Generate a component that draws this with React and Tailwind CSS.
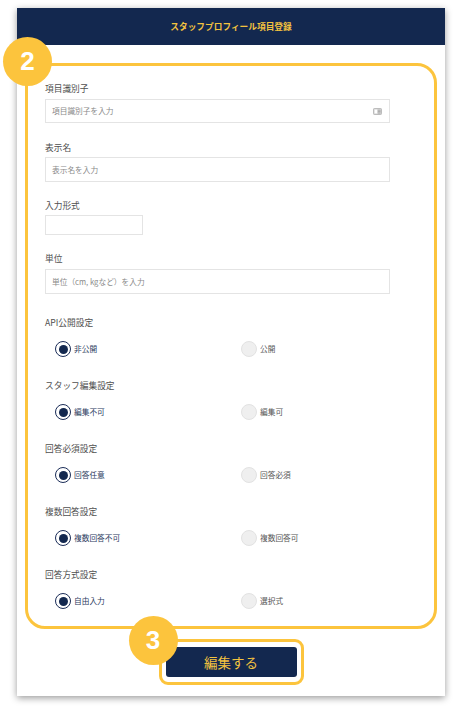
import React from "react";

const font = { fontFamily: '"Noto Sans CJK JP", "Noto Sans", sans-serif' };

function Label({ children, className = "" }) {
  return (
    <div className={`h-[12px] text-[8.7px] leading-[12px] text-[#4f4f4f] ${className}`}>
      {children}
    </div>
  );
}

function TextField({ placeholder, icon, className = "" }) {
  return (
    <div
      className={`flex items-center justify-between border border-[#e4e4e4] bg-white pl-[6px] pr-[6px] ${className}`}
    >
      <span className="text-[7.7px] text-[#8a8a8a]">{placeholder}</span>
      {icon && (
        <svg width="9" height="7" viewBox="0 0 9 7" className="mr-[1px]">
          <rect x="0.5" y="0.5" width="8" height="6" rx="0.8" fill="#d6d6d6" stroke="#b0b0b0" strokeWidth="0.8" />
          <rect x="1.6" y="1.6" width="2.4" height="3.8" fill="#ffffff" />
          <line x1="5" y1="2.2" x2="7.6" y2="2.2" stroke="#9a9a9a" strokeWidth="0.7" />
          <line x1="5" y1="3.6" x2="7.6" y2="3.6" stroke="#9a9a9a" strokeWidth="0.7" />
          <line x1="5" y1="5" x2="7.6" y2="5" stroke="#9a9a9a" strokeWidth="0.7" />
        </svg>
      )}
    </div>
  );
}

function Radio({ checked, label }) {
  return (
    <div className="flex items-center gap-[3px]">
      {checked ? (
        <div className="flex h-[16px] w-[16px] items-center justify-center rounded-full border-[1.5px] border-[#1b2d58] bg-white">
          <div className="h-[9px] w-[9px] rounded-full bg-[#13284f]" />
        </div>
      ) : (
        <div className="h-[16px] w-[16px] rounded-full border border-[#e2e2e2] bg-[#efefef]" />
      )}
      <span
        className={`text-[7.7px] leading-[12px] ${checked ? "text-[#2a3a60]" : "text-[#555555]"}`}
      >
        {label}
      </span>
    </div>
  );
}

const radioGroups = [
  { title: "API公開設定", options: ["非公開", "公開"] },
  { title: "スタッフ編集設定", options: ["編集不可", "編集可"] },
  { title: "回答必須設定", options: ["回答任意", "回答必須"] },
  { title: "複数回答設定", options: ["複数回答不可", "複数回答可"] },
  { title: "回答方式設定", options: ["自由入力", "選択式"] },
];

function Badge({ n, className }) {
  return (
    <div
      className={`absolute z-10 flex h-[49px] w-[49px] items-center justify-center rounded-full bg-[#fcc43d] text-[26px] font-bold text-white ${className}`}
      style={{ fontFamily: '"Liberation Sans", Arial, sans-serif' }}
    >
      {n}
    </div>
  );
}

export default function App() {
  return (
    <div className="h-[708px] w-[455px] bg-white pt-[8px]" style={font}>
      <div className="ml-[17px] flex h-[688px] w-[428px] flex-col bg-white shadow-[0_2px_7px_rgba(0,0,0,0.4)]">
        {/* header */}
        <div className="flex h-[37px] items-center justify-center bg-[#13284f]">
          <span className="text-[8.7px] font-bold text-[#f3c33f]">
            スタッフプロフィール項目登録
          </span>
        </div>

        {/* form */}
        <div className="relative mx-[8px] mt-[18px] rounded-[20px] border-[3px] border-[#fcc43d] pb-[17px] pl-[17px] pt-[17px]">
          <Badge n="2" className="left-[-25px] top-[-29px]" />

          <Label>項目識別子</Label>
          <TextField placeholder="項目識別子を入力" icon className="mt-[4px] h-[24px] w-[345px]" />

          <Label className="mt-[19px]">表示名</Label>
          <TextField placeholder="表示名を入力" className="mt-[3px] h-[25px] w-[345px]" />

          <Label className="mt-[18px]">入力形式</Label>
          <TextField placeholder="" className="mt-[3px] h-[20px] w-[98px]" />

          <Label className="mt-[18px]">単位</Label>
          <TextField placeholder="単位（cm, kgなど）を入力" className="mt-[4px] h-[25px] w-[345px]" />

          {radioGroups.map((g) => (
            <div key={g.title} className="mt-[23px]">
              <Label>{g.title}</Label>
              <div className="mt-[12px] flex pl-[10px]">
                <div className="w-[186px]">
                  <Radio checked label={g.options[0]} />
                </div>
                <Radio checked={false} label={g.options[1]} />
              </div>
            </div>
          ))}
        </div>

        {/* submit */}
        <div className="mt-[10px] flex justify-center">
          <div className="relative rounded-[9px] border-[3px] border-[#fcc43d] px-[4px] py-[5px]">
            <Badge n="3" className="left-[-33px] top-[-26px]" />
            <button className="flex h-[30px] w-[131px] items-center justify-center rounded-[3px] bg-[#13284f] text-[13.5px] text-[#f3c33f]">
              編集する
            </button>
          </div>
        </div>
      </div>
    </div>
  );
}
